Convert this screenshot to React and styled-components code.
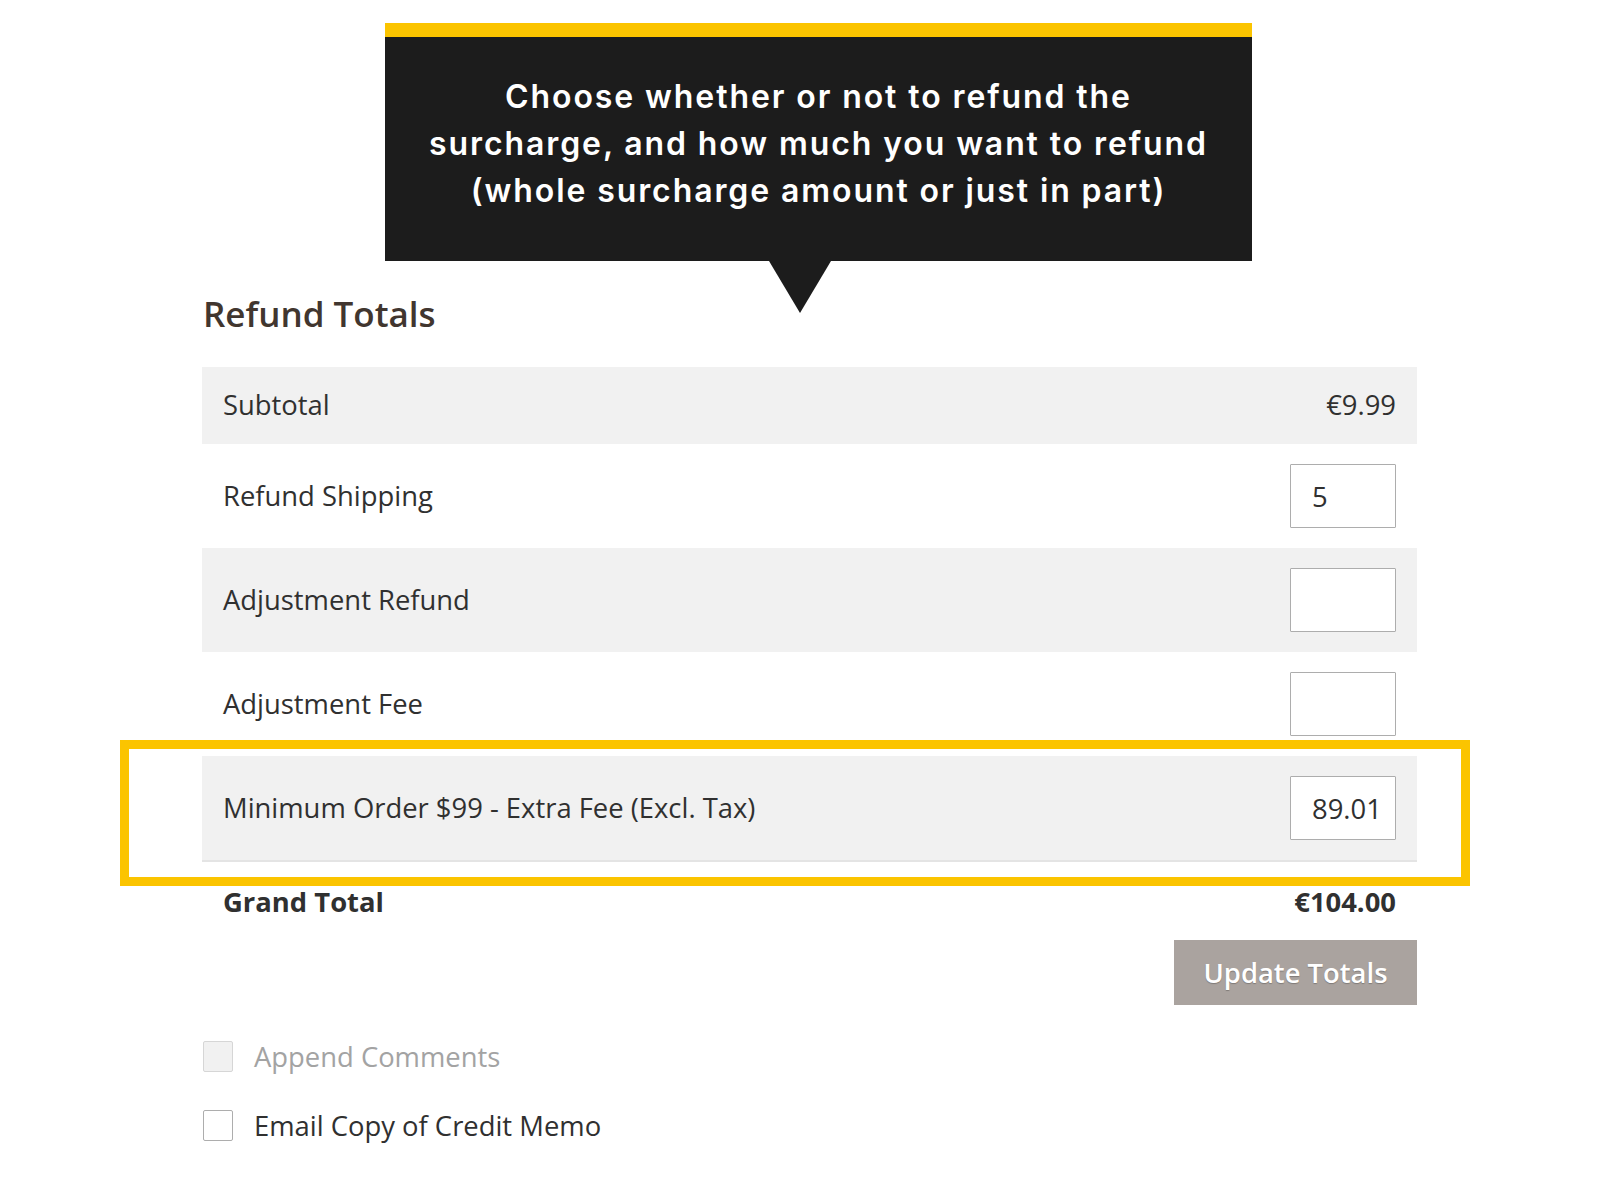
import React from 'react';
import styled, { createGlobalStyle } from 'styled-components';

const GlobalStyle = createGlobalStyle`
  html, body {
    margin: 0;
    padding: 0;
    background: #ffffff;
  }
  body {
    font-family: 'Open Sans', 'Liberation Sans', Arial, sans-serif;
    color: #303030;
  }
`;

const rows = [
  { label: 'Subtotal', value: '€9.99', shaded: true },
  { label: 'Refund Shipping', input: '5' },
  { label: 'Adjustment Refund', input: '', shaded: true },
  { label: 'Adjustment Fee', input: '' },
];

const App = () => {
  return (
    <Page>
      <GlobalStyle />
      <Callout>
        Choose whether or not to refund the
        <br />
        surcharge, and how much you want to refund
        <br />
        (whole surcharge amount or just in part)
      </Callout>

      <Section>
        <Heading>Refund Totals</Heading>

        <Table>
          {rows.map((row) => (
            <Row key={row.label} shaded={row.shaded} compact={!('input' in row)}>
              <Label>{row.label}</Label>
              {'input' in row ? (
                <AmountInput type="text" defaultValue={row.input} />
              ) : (
                <Value>{row.value}</Value>
              )}
            </Row>
          ))}
          <Row shaded divided>
            <Label>Minimum Order $99 - Extra Fee (Excl. Tax)</Label>
            <AmountInput type="text" defaultValue="89.01" />
            <Highlight />
          </Row>
          <TotalRow>
            <span>Grand Total</span>
            <span>€104.00</span>
          </TotalRow>
        </Table>

        <Actions>
          <UpdateButton type="button">Update Totals</UpdateButton>
        </Actions>

        <Options>
          <Option disabled>
            <Box disabled />
            Append Comments
          </Option>
          <Option>
            <Box />
            Email Copy of Credit Memo
          </Option>
        </Options>
      </Section>
    </Page>
  );
};

const Page = styled.div`
  padding: 23px 0 60px;
  min-height: 1200px;
  box-sizing: border-box;
`;

const Callout = styled.div`
  position: relative;
  margin-left: 385px;
  width: 867px;
  box-sizing: border-box;
  border-top: 14px solid #fbc400;
  background: #1c1c1c;
  color: #ffffff;
  padding: 36px 0 47px;
  text-align: center;
  font-family: Inter, 'Noto Sans', sans-serif;
  font-weight: 600;
  font-size: 32px;
  line-height: 47px;
  letter-spacing: 1.9px;

  &::after {
    content: '';
    position: absolute;
    left: 384px;
    top: 100%;
    border-left: 31px solid transparent;
    border-right: 31px solid transparent;
    border-top: 52px solid #1c1c1c;
  }
`;

const Section = styled.div`
  margin-left: 202px;
  width: 1215px;
`;

const Heading = styled.h2`
  margin: 31px 0 32px 1px;
  font-size: 35px;
  line-height: 43px;
  font-weight: 600;
  color: #41362f;
`;

const Table = styled.div`
  display: flex;
  flex-direction: column;
`;

const Row = styled.div`
  position: relative;
  display: flex;
  align-items: center;
  justify-content: space-between;
  padding: ${(p) => (p.compact ? '19px 21px 20px' : '20px 21px')};
  background: ${(p) => (p.shaded ? '#f1f1f1' : '#ffffff')};
  border-bottom: ${(p) => (p.divided ? '2px solid #e4e4e4' : 'none')};
  font-size: 27.4px;
  line-height: 38px;
`;

const Label = styled.span`
  color: #303030;
`;

const Value = styled.span`
  color: #303030;
`;

const AmountInput = styled.input`
  width: 106px;
  height: 64px;
  box-sizing: border-box;
  border: 1px solid #adadad;
  border-radius: 1px;
  background: #ffffff;
  padding: 0 10px 0 21px;
  font-family: 'Open Sans', 'Liberation Sans', Arial, sans-serif;
  font-size: 27.4px;
  color: #303030;
  outline: none;
`;

const Highlight = styled.div`
  position: absolute;
  top: -16px;
  left: -82px;
  right: -53px;
  bottom: -26px;
  border: 9px solid #fbc400;
  pointer-events: none;
`;

const TotalRow = styled.div`
  display: flex;
  justify-content: space-between;
  padding: 21px 21px 19px;
  font-size: 27.4px;
  line-height: 38px;
  font-weight: 700;
  color: #303030;
`;

const Actions = styled.div`
  display: flex;
  justify-content: flex-end;
`;

const UpdateButton = styled.button`
  width: 243px;
  height: 65px;
  border: none;
  background: #aaa39f;
  color: #ffffff;
  font-family: 'Open Sans', 'Liberation Sans', Arial, sans-serif;
  font-size: 27.4px;
  font-weight: 600;
  text-shadow: 0 1px 1px rgba(0, 0, 0, 0.25);
  cursor: default;
`;

const Options = styled.div`
  display: flex;
  flex-direction: column;
  gap: 38px;
  margin-top: 36px;
`;

const Option = styled.label`
  display: flex;
  align-items: center;
  gap: 21px;
  font-size: 27.4px;
  line-height: 31px;
  color: ${(p) => (p.disabled ? '#a3a3a3' : '#303030')};
`;

const Box = styled.span`
  width: 30px;
  height: 31px;
  box-sizing: border-box;
  border: 1px solid ${(p) => (p.disabled ? '#d6d6d6' : '#adadad')};
  border-radius: 2px;
  background: ${(p) => (p.disabled ? '#f1f1f1' : '#ffffff')};
  margin-left: 1px;
`;

export default App;
